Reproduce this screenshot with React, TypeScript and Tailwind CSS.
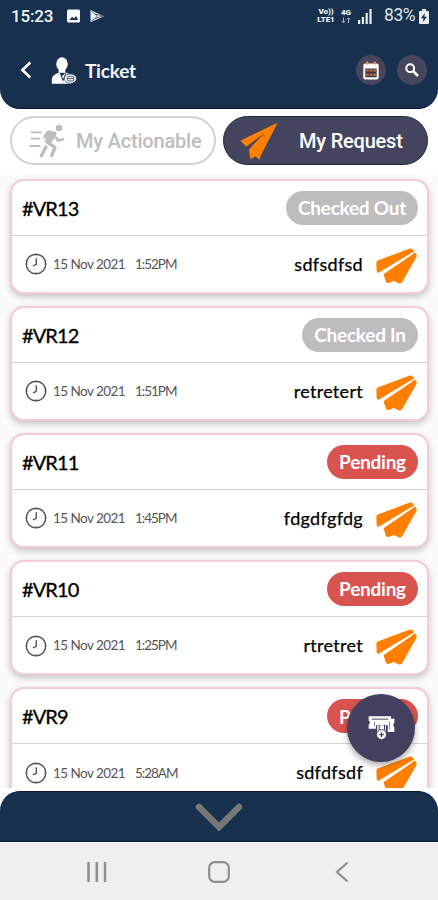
type TicketStatus = 'Checked Out' | 'Checked In' | 'Pending';

interface TicketData {
  id: string;
  date: string;
  time: string;
  note: string;
  status: TicketStatus;
}

const tickets: TicketData[] = [
  { id: '#VR13', date: '15 Nov 2021', time: '1:52PM', note: 'sdfsdfsd', status: 'Checked Out' },
  { id: '#VR12', date: '15 Nov 2021', time: '1:51PM', note: 'retretert', status: 'Checked In' },
  { id: '#VR11', date: '15 Nov 2021', time: '1:45PM', note: 'fdgdfgfdg', status: 'Pending' },
  { id: '#VR10', date: '15 Nov 2021', time: '1:25PM', note: 'rtretret', status: 'Pending' },
  { id: '#VR9', date: '15 Nov 2021', time: '5:28AM', note: 'sdfdfsdf', status: 'Pending' },
];

const statusStyles: Record<TicketStatus, string> = {
  'Checked Out': 'w-[132px] bg-[#bdbdbd]',
  'Checked In': 'w-[116px] bg-[#bdbdbd]',
  Pending: 'w-[91px] bg-[#d9534f]',
};

const PaperPlane = () => (
  <svg viewBox="3 2 121 106" className="mt-[3px] h-[36px] w-[41px] shrink-0" fill="#ff8000">
    <path d="M4 46Q4 41 8 39L101 4Q108 2 112 6L116 12L105 18L11 75Q6 76 5 70Z" />
    <path d="M25 79L106 24L117 15Q126 21 122 29L80 103Q75 109 68 105L55 99L40 105Q33 106 32 100Z" />
  </svg>
);

const ClockIcon = () => (
  <svg viewBox="0 0 22 22" className="h-[22px] w-[22px] shrink-0" fill="none" stroke="#555" strokeWidth="1.4">
    <circle cx="11" cy="11" r="9.8" />
    <path d="M11.3 5.2v6.2l-3.4 1.5" />
    <path d="M11 1.5v1.5M11 19v1.5M1.5 11H3M19 11h1.5" strokeWidth="0.7" />
  </svg>
);

const StatusBar = () => (
  <div className="flex h-8 items-center pl-[11px] pr-[9px] font-[Roboto,sans-serif] text-[#f3f5f7]">
    <span className="w-[43px] text-[17px] font-medium leading-none tracking-[-0.2px]">15:23</span>
    <svg viewBox="0 0 38 14" className="ml-[13px] h-[14px] w-[38px]">
      <rect x="0" y="0.5" width="13" height="13" rx="1.5" fill="#fff" />
      <path d="M2.5 11l2.6-3.2 2 1.8 2-2.6 2 4z" fill="#17304e" />
      <path d="M23.5 1v12.2L37 7.2z" fill="#e9eef2" />
      <path d="M24.5 2.2l6 5-6 5M28 5l8 2-8 2.5" fill="none" stroke="#496078" strokeWidth="0.9" />
    </svg>
    <div className="ml-auto flex items-center">
      <div className="flex w-[18px] flex-col items-center text-[8px] font-black leading-[8px] tracking-[-0.1px]">
        <span>Vo))</span>
        <span>LTE1</span>
      </div>
      <div className="ml-[5px] flex w-[12px] flex-col items-center text-[8px] font-black leading-[8px]">
        <span>4G</span>
        <svg viewBox="0 0 10 7" className="h-[7px] w-[10px]" fill="none" stroke="#a8b4c0" strokeWidth="1">
          <path d="M2.5 0.5v5M0.8 4l1.7 1.8L4.2 4M7.5 6V1M5.8 2.6l1.7-1.8 1.7 1.8" />
        </svg>
      </div>
      <svg viewBox="0 0 14 15" className="ml-[6px] h-[15px] w-[14px]" fill="#e9eef2">
        <rect x="0" y="11" width="2.2" height="4" />
        <rect x="3.8" y="8" width="2.2" height="7" />
        <rect x="7.6" y="4" width="2.2" height="11" />
        <rect x="11.4" y="0" width="2.2" height="15" />
      </svg>
      <span className="ml-[12px] w-[32px] whitespace-nowrap text-[17.5px] leading-none tracking-[-0.4px] text-[#dfe3e7]">83%</span>
      <svg viewBox="0 0 10 15" className="ml-[3px] h-[15px] w-[10px]">
        <path d="M3 0h4v2h2q1 0 1 1v11q0 1-1 1H1q-1 0-1-1V3q0-1 1-1h2z" fill="#e9eef2" />
        <path d="M5.8 4L2 9.2h2.5L4 13l4-5.2H5.4z" fill="#17304e" />
      </svg>
    </div>
  </div>
);

const Header = () => (
  <header className="h-[109px] shrink-0 rounded-b-[20px] border-b border-[#041739] bg-[#16304d]">
    <StatusBar />
    <div className="flex h-[76px] items-center pl-5 pr-[11px]">
      <svg viewBox="0 0 12 18" className="h-[18px] w-3" fill="none" stroke="#fff" strokeWidth="2.6">
        <path d="M10.3 1.5L2.4 9l7.9 7.5" />
      </svg>
      {/* Agent with ticket badge */}
      <svg viewBox="0 0 76 80" className="ml-[19px] h-[27px] w-[26px]">
        <ellipse cx="32" cy="21" rx="17" ry="20" fill="#fff" />
        <path d="M22 35h20v12H22z" fill="#fff" />
        <path d="M2 79V65Q3 53 24 46l9 11 9-11q12 3 17 9v24z" fill="#fff" />
        <path d="M27 47l8 22 4-8 4-13" fill="none" stroke="#16304d" strokeWidth="3" />
        <ellipse cx="57" cy="64" rx="18" ry="14" fill="#fff" stroke="#16304d" strokeWidth="2" />
        <rect x="48" y="57" width="19" height="14" rx="4" fill="none" stroke="#16304d" strokeWidth="2.4" />
        <path d="M48 64h19" fill="none" stroke="#16304d" strokeWidth="2.4" />
      </svg>
      <h1 className="ml-[8px] font-[Lato,sans-serif] text-[19px] font-bold leading-none tracking-[-0.2px] text-[#f4f6f8]">
        Ticket
      </h1>
      <button className="ml-auto flex h-[30px] w-[30px] items-center justify-center rounded-full bg-[#47455e]">
        <svg viewBox="0 0 16 19" className="h-[19px] w-4">
          <rect x="0.3" y="2.5" width="15.4" height="16" rx="2" fill="#fff" />
          <path d="M2.3 7.5h11.4v8.8H2.3z" fill="#433847" />
          <path d="M3.2 9.5h2.6M6.8 9.5h2.6M10.3 9.5h2.6M3.2 13.7h2.6M6.8 13.7h2.6M10.3 13.7h2.6" stroke="#c77443" strokeWidth="2" />
          <path d="M4.2 0.5v3M11.8 0.5v3" stroke="#e38b4d" strokeWidth="2.2" />
        </svg>
      </button>
      <button className="ml-[11px] flex h-[30px] w-[30px] items-center justify-center rounded-full bg-[#47455e]">
        <svg viewBox="0 0 14 14" className="h-[14px] w-[14px]" fill="none" stroke="#fff">
          <circle cx="5.2" cy="5.2" r="3.9" strokeWidth="2" />
          <path d="M8 8l5 5" strokeWidth="2.7" />
        </svg>
      </button>
    </div>
  </header>
);

const Tabs = () => (
  <div className="flex h-[49px] gap-[7px] px-[10px] font-[Roboto,sans-serif] text-[20px] font-medium tracking-[-0.2px]">
    <button className="flex w-[206px] items-center rounded-full border-2 border-[#d2d2d2] bg-white pl-[17px] text-[#bdbdbd]">
      <svg viewBox="0 0 108 102" className="h-[34px] w-[36px] shrink-0" fill="none" stroke="#bdbdbd" strokeLinecap="round" strokeLinejoin="round">
        <circle cx="90" cy="12" r="10" fill="#bdbdbd" stroke="none" />
        <path d="M8 25h28M8 44h22M4 66h28" strokeWidth="5.5" />
        <path d="M48 39l10-15 20 4-18 30 18 12-10 25" strokeWidth="10" />
        <path d="M70 32L58 51" strokeWidth="19" />
        <path d="M77 36l10 13 15-3" strokeWidth="8" />
        <path d="M51 69L46 78L37 95" strokeWidth="10" />
      </svg>
      <span className="ml-[11px] whitespace-nowrap">My Actionable</span>
    </button>
    <button className="flex w-[205px] items-center rounded-full border border-[#26253f] bg-[#45445f] pl-[16px] text-white">
      <svg viewBox="0 0 114 114" className="h-[38px] w-[38px] shrink-0" fill="#ff8000">
        <path d="M113 2L1 56l18 18Q47 52 76 33Q51 54 27 83l4 29 15-9 13 10 4-14Z" />
      </svg>
      <span className="ml-[21px] whitespace-nowrap">My Request</span>
    </button>
  </div>
);

const TicketCard = ({ ticket }: { ticket: TicketData }) => (
  <article className="h-[115px] shrink-0 rounded-[14px] border-2 border-[#f3ccd8] bg-white font-[Lato,sans-serif] shadow-[0_3px_7px_rgba(0,0,0,0.22)]">
    <div className="flex h-[55px] items-center justify-between border-b-[1.5px] border-[#d4d4d4] pl-[10px] pr-[9px]">
      <span className="text-[20px] font-normal leading-none tracking-[-0.9px] text-black [-webkit-text-stroke:0.3px_black]">
        {ticket.id}
      </span>
      <span className={`flex h-[34px] items-center justify-center whitespace-nowrap rounded-full pt-px text-[19px] font-bold tracking-[-0.25px] text-white ${statusStyles[ticket.status]}`}>
        {ticket.status}
      </span>
    </div>
    <div className="flex h-[56px] items-center pl-[13px] pr-[10px] pt-px">
      <ClockIcon />
      <span className="ml-[6px] w-[82px] whitespace-nowrap text-[13.5px] tracking-[-0.55px] text-[#555]">{ticket.date}</span>
      <span className="whitespace-nowrap text-[13.5px] tracking-[-1px] text-[#555]">{ticket.time}</span>
      <span className="ml-auto mr-[13px] text-[18px] tracking-[0.3px] text-black [-webkit-text-stroke:0.25px_black]">{ticket.note}</span>
      <PaperPlane />
    </div>
  </article>
);

const NavBar = () => (
  <nav className="flex h-[58px] shrink-0 items-center border-t border-[#fafafa] bg-[#efefef] pl-[86px]">
    <svg viewBox="0 0 22 22" className="h-[22px] w-[22px]" stroke="#8f8f8f" strokeWidth="2.5">
      <path d="M2.5 1v20M10.8 1v20M19 1v20" />
    </svg>
    <svg viewBox="0 0 22 22" className="ml-[100px] h-[22px] w-[22px]" fill="none" stroke="#8f8f8f" strokeWidth="2.2">
      <rect x="1.2" y="1.2" width="19.6" height="19.6" rx="5.5" />
    </svg>
    <svg viewBox="0 0 14 22" className="ml-[105px] h-[22px] w-[14px]" fill="none" stroke="#8f8f8f" strokeWidth="2.2">
      <path d="M12.5 1.5L2 11l10.5 9.5" />
    </svg>
  </nav>
);

export default function App() {
  return (
    <div className="relative flex h-[900px] w-[438px] flex-col overflow-hidden bg-white">
      <Header />
      <div className="h-[7px] shrink-0" />
      <Tabs />
      <main className="mt-[9px] flex h-[614px] flex-col gap-[12.2px] overflow-hidden bg-[#fbfbfb] pl-[10px] pr-[9px] pt-[4.5px]">
        {tickets.map((ticket) => (
          <TicketCard key={ticket.id} ticket={ticket} />
        ))}
      </main>
      <footer className="mt-auto flex h-[51px] shrink-0 justify-center rounded-t-[20px] border-y border-[#041739] bg-[#16304d] pt-[11px]">
        <svg viewBox="0 0 48 28" className="h-7 w-12" fill="none" stroke="#777" strokeWidth="6.5" strokeLinecap="round">
          <path d="M4 4l20 20L44 4" />
        </svg>
      </footer>
      <NavBar />

      {/* Create ticket */}
      <button className="absolute left-[347px] top-[694px] flex h-[68px] w-[68px] items-center justify-center rounded-full bg-[#42405e] shadow-[0_3px_6px_rgba(0,0,0,0.35)]">
        <svg viewBox="0 0 82 72" className="h-6 w-[27px]" fill="#fff">
          <path d="M2 0h68v8h10v13q-7 5 0 12v15H60V28H24v10H2V25q8-5 0-12z" />
          <path d="M12 9h50" fill="none" stroke="#42405e" strokeWidth="3" />
          <path d="M20 17v13M65 17v24" fill="none" stroke="#42405e" strokeWidth="2" />
          <path d="M28 28h26v22H28z" />
          <path d="M34 26v16M50 26v16" fill="none" stroke="#42405e" strokeWidth="3" />
          <circle cx="41" cy="56" r="15" stroke="#42405e" strokeWidth="3" />
          <path d="M41 49v14M34 56h14" stroke="#42405e" strokeWidth="4" />
        </svg>
      </button>
    </div>
  );
}
